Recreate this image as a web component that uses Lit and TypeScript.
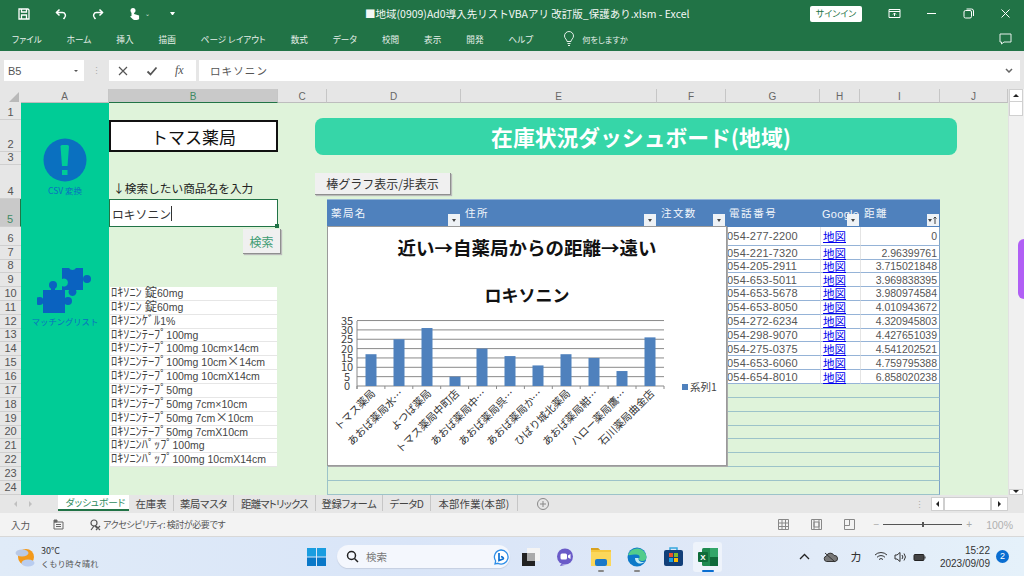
import { LitElement, html, css, svg } from "lit";
import { customElement } from "lit/decorators.js";

const COLS = ["A", "B", "C", "D", "E", "F", "G", "H", "I", "J"];
const ROW_H = [17, 32, 13, 34, 28, 19, 14, 13, 14, ...Array(15).fill(13.87)];
const LIST = [
  "ﾛｷｿﾆﾝ 錠60mg", "ﾛｷｿﾆﾝ 錠60mg", "ﾛｷｿﾆﾝｹﾞﾙ1%", "ﾛｷｿﾆﾝﾃｰﾌﾟ100mg",
  "ﾛｷｿﾆﾝﾃｰﾌﾟ100mg 10cm×14cm", "ﾛｷｿﾆﾝﾃｰﾌﾟ100mg 10cm×14cm", "ﾛｷｿﾆﾝﾃｰﾌﾟ100mg 10cmX14cm",
  "ﾛｷｿﾆﾝﾃｰﾌﾟ50mg", "ﾛｷｿﾆﾝﾃｰﾌﾟ50mg 7cm×10cm", "ﾛｷｿﾆﾝﾃｰﾌﾟ50mg 7cm×10cm",
  "ﾛｷｿﾆﾝﾃｰﾌﾟ50mg 7cmX10cm", "ﾛｷｿﾆﾝﾊﾟｯﾌﾟ100mg", "ﾛｷｿﾆﾝﾊﾟｯﾌﾟ100mg 10cmX14cm",
];
const TABLE = [
  ["054-277-2200", "0"], ["054-221-7320", "2.96399761"], ["054-205-2911", "3.715021848"],
  ["054-653-5011", "3.969838395"], ["054-653-5678", "3.980974584"], ["054-653-8050", "4.010943672"],
  ["054-272-6234", "4.320945803"], ["054-298-9070", "4.427651039"], ["054-275-0375", "4.541202521"],
  ["054-653-6060", "4.759795388"], ["054-654-8010", "6.858020238"],
];
const BARS: [string, number, number][] = [
  ["トマス薬局", 17, 371], ["あおば薬局水…", 25, 399], ["よつば薬局", 31, 427], ["トマス薬局中町店", 5, 455],
  ["あおば薬局中…", 20, 482], ["あおば薬局呉…", 16, 510], ["あおば薬局か…", 11, 538], ["ひばり城北薬局", 17, 566],
  ["あおば薬局紺…", 15, 594], ["ハロー薬局鷹…", 8, 622], ["石川薬局曲金店", 26, 650],
];
const RIBBON = ["ファイル", "ホーム", "挿入", "描画", "ページ レイアウト", "数式", "データ", "校閲", "表示", "開発", "ヘルプ"];
const SHEETS: [string, number, number][] = [
  ["在庫表", 45, 0], ["薬局マスタ", 60, -0.2], ["距離マトリックス", 82, -0.7],
  ["登録フォーム", 67, -0.3], ["データD", 48, -0.5], ["本部作業(本部)", 87, 0.3],
];

const AXIS_Y = 386;
const STEP = 9.35 / 5;

function chart() {
  const ticks = [0, 5, 10, 15, 20, 25, 30, 35];
  return html`<svg class="plot" viewBox="327 226 400 240" width="400" height="240">
    ${ticks.map((t) => svg`
      <line x1="357" x2="664" y1=${AXIS_Y - t * STEP} y2=${AXIS_Y - t * STEP} stroke="#8a8a8a" stroke-width="1"></line>
      <text x="347" y=${AXIS_Y - t * STEP + 4} text-anchor="middle" font-size="11" fill="#444">${t}</text>`)}
    <line x1="357" x2="357" y1="321" y2="389" stroke="#8a8a8a"></line>
    ${BARS.map(([label, v, x], i) => svg`
      <rect x=${x - 5.5} y=${AXIS_Y - v * STEP} width="11" height=${v * STEP} fill="#4f81bd"></rect>
      <line x1=${357 + i * 27.9} x2=${357 + i * 27.9} y1="386" y2="389" stroke="#8a8a8a"></line>
      <text transform="translate(${x + 5} 394) rotate(-45)" text-anchor="end" font-size="10.5" fill="#333">${label}</text>`)}
    <line x1="664" x2="664" y1="386" y2="389" stroke="#8a8a8a"></line>
    <rect x="682" y="384" width="6" height="6" fill="#4f81bd"></rect>
    <text x="690" y="391" font-size="10.5" fill="#444">系列1</text>
  </svg>`;
}

function listText(t: string, wide: boolean) {
  const re = wide ? /([\uFF61-\uFF9F錠×]+)/ : /([\uFF61-\uFF9F錠]+)/;
  return t.split(re).filter(Boolean).map((p, _i) =>
    re.test(p) ? html`<span class="k">${p}</span>` : html`<span class="n">${p}</span>`
  );
}

const I = {
  save: html`<svg width="14" height="14" viewBox="0 0 14 14" fill="none" stroke="#fff" stroke-width="1.3"><path d="M2 2h9l1 1v9H2z"/><path d="M4.500 2v3h5V2M4.500 12V8h5v4"/></svg>`,
  undo: html`<svg width="14" height="14" viewBox="0 0 14 14" fill="none" stroke="#fff" stroke-width="1.5"><path d="M2.500 5.500h6a3 3 0 0 1 2 5.200L9.500 12"/><path d="M5.500 2.500l-3 3 3 3"/></svg>`,
  redo: html`<svg width="14" height="14" viewBox="0 0 14 14" fill="none" stroke="#fff" stroke-width="1.5"><path d="M11.500 5.500h-6a3 3 0 0 0-2 5.200L4.500 12"/><path d="M8.500 2.500l3 3-3 3"/></svg>`,
  touch: html`<svg width="14" height="14" viewBox="0 0 14 14" fill="#fff"><circle cx="5" cy="3.500" r="2.500"/><path d="M3.500 4h2.600v3l5 1.400V12c-1 1-4 1.500-6 .5L2 9.500l1.500-.5v-5z"/></svg>`,
};

@customElement("app-root")
export class AppRoot extends LitElement {
  static styles = css`
    :host { display: block; width: 1024px; height: 576px; overflow: hidden; background: #e6e6e6;
      font-family: "Noto Sans CJK JP", "Liberation Sans", sans-serif; color: #333; }
    * { box-sizing: border-box; }
    svg { display: block; flex: none; }
    .app { display: flex; flex-direction: column; width: 1024px; height: 576px; }

    .titlebar { height: 26px; background: #217346; display: flex; align-items: center; color: #fff; padding: 1px 0 0 17px; }
    .qat { display: flex; align-items: center; gap: 23px; width: 348px; }
    .caret { font-size: 6px; opacity: .8; margin-left: -20px; }
    .dot { margin-left: -3px; width: 5px; height: 0; border: 2.5px solid transparent; border-top: 3px solid #fff; border-bottom: 0; }
    .title { width: 445px; font-size: 10.5px; white-space: nowrap; opacity: .95; }
    .signin { width: 52px; height: 16px; background: #fff; color: #217346; font-size: 9px; display: flex; align-items: center; justify-content: center; border-radius: 2px; font-feature-settings: "palt"; }
    .win { display: flex; align-items: center; margin-left: 26px; gap: 24px; }
    .win svg { width: 13px; height: 13px; }

    .ribbon { height: 25px; background: #217346; display: flex; align-items: center; color: #e6f0ea; font-size: 8.6px; padding: 0 12px 0 12px; gap: 25px; font-feature-settings: "palt"; }
    .ribbon .tell { display: flex; align-items: center; gap: 7px; margin-left: 5px; flex: 1; font-size: 8.2px; }
    .ribbon span { white-space: nowrap; }

    .fbar { height: 38px; background: #e6e6e6; display: flex; align-items: center; padding: 1px 4px 0 4px; }
    .namebox { width: 80px; height: 21px; background: #fff; display: flex; align-items: center; justify-content: space-between; padding: 0 5px 0 4px; font: 11px "Liberation Sans", sans-serif; color: #555; }
    .grip { width: 25px; text-align: center; color: #aaa; font-size: 9px; line-height: 1; }
    .fx { width: 87px; height: 21px; background: #fff; display: flex; align-items: center; gap: 17px; padding-left: 8px; }
    .fxt { font: italic 12px "Liberation Serif", serif; color: #555; }
    .finput { flex: 1; height: 21px; margin-left: 3px; background: #fff; display: flex; align-items: center; justify-content: space-between; padding: 0 7px 0 11px; font-size: 10.5px; letter-spacing: 1.1px; color: #555; }

    .sheet { position: relative; display: grid; height: 406px; background: #dff3da;
      grid-template-columns: 21px 88px 169px 49px 134px 196px 69px 94px 40px 80px 68px 16px; }
    .corner { background: #e6e6e6; position: relative; }
    .corner::after { content: ""; position: absolute; right: 2px; bottom: 1px; border-style: solid; border-width: 0 0 10px 10px; border-color: transparent transparent #b9b9b9 transparent; }
    .ch { background: #e6e6e6; border-right: 1px solid #c6c6c6; border-bottom: 1px solid #bdbdbd; font: 10px "Liberation Sans", sans-serif; color: #666; display: flex; align-items: center; justify-content: center; padding-top: 1px; }
    .ch.sel { background: #c9c9c9; border-bottom: 1px solid #217346; color: #3f8a63; }
    .rh { background: #e6e6e6; border-bottom: 1px solid #cfcfcf; font: 11px "Liberation Sans", sans-serif; color: #555; display: flex; align-items: flex-end; justify-content: center; line-height: 13px; }
    .rh.sel { background: #c9c9c9; color: #3f8a63; border-right: 1px solid #217346; }
    .band { background: #00cc96; position: relative; }
    .scroll { background: #f0f0f0; border-left: 1px solid #e2e2e2; position: relative; display: flex; flex-direction: column; justify-content: space-between; align-items: flex-end; padding-right: 1px; }
    .sbtn { width: 14px; height: 13px; background: #fff; border: 1px solid #d0d0d0; display: flex; align-items: center; justify-content: center; }
    .sbtn.low { height: 6px; }
    .sthumb { width: 14px; height: 15px; background: #fff; border: 1px solid #d0d0d0; margin-top: -1px; }
    .sgap { flex: 1; }
    .up { border-style: solid; border-width: 0 3px 3px; border-color: transparent transparent #222; }
    .down { border-style: solid; border-width: 3px 3px 0; border-color: #222 transparent transparent; }
    .purple { position: absolute; right: 0; top: 150px; width: 6px; height: 60px; background: #b15ff5; border-radius: 7px 0 0 7px; }

    .shop { background: #fff; border: 2px solid #111; font-size: 17px; color: #111; display: flex; align-items: center; justify-content: center; }
    .label { font-size: 11.7px; color: #222; display: flex; align-items: flex-end; padding: 0 0 3px 4px; white-space: nowrap; }
    .input { background: #fff; border: 1px solid #217346; font-size: 11.8px; color: #333; display: flex; align-items: center; padding-left: 2px; position: relative; }
    .input i { display: block; width: 1px; height: 15px; background: #333; }
    .input::after { content: ""; position: absolute; right: -2px; bottom: -2px; width: 4px; height: 4px; background: #217346; }
    .li { background: #fff; border-bottom: 1px solid #e6e6e6; color: #444; font: 10.5px/13px "Liberation Sans", sans-serif; margin: 0 1px; padding-left: 1px; white-space: pre; }
    .li .k { font: 12.3px/10px "Noto Sans CJK JP", sans-serif; }
    .li .n { line-height: 10px; }

    .th { background: #4f81bd; color: #f2f6fb; font-size: 10.5px; letter-spacing: 1.4px; position: relative; padding: 5px 0 0 4px; white-space: nowrap; border-top: 1px solid #95b3d7; }
    .th.c { padding-left: 3px; letter-spacing: 1.6px; }
    .th.g { padding: 8px 0 0 2px; letter-spacing: .3px; font-family: "Liberation Sans", sans-serif; font-size: 11px; }
    .flt { position: absolute; right: 1px; bottom: 1px; width: 12px; height: 12px; background: #eef2f6; display: flex; align-items: center; justify-content: center; }
    .flt b { border-style: solid; border-width: 3px 2.5px 0; border-color: #444 transparent transparent; }
    .flt.sort { justify-content: flex-start; padding-left: 1px; }
    .flt.sort svg { margin-left: 1px; }
    .tline { border-bottom: 1px solid #9cc3c9; border-left: 1px solid #9cc3c9; border-right: 1px solid #7ea3c8; }
    .td { background: #fff; border-bottom: 1px solid #95b3d7; display: flex; align-items: center; white-space: nowrap; color: #555; font-size: 10.5px; }
    .phone { font: 11px "Liberation Sans", sans-serif; letter-spacing: .2px; padding-left: 1px; color: #555; }
    .link { color: #0000ee; text-decoration: underline; font-size: 11.5px; padding-left: 2px; border-left: 1px solid #e4e4e4; }
    .num { font-family: "Liberation Sans", sans-serif; justify-content: flex-end; padding-right: 2px; border-left: 1px solid #e4e4e4; border-right: 1px solid #7ea3c8; }

    .banner { position: absolute; left: 315px; top: 29px; width: 642px; height: 37px; background: #36d6a8; border-radius: 8px; color: #fff; font-size: 21.8px; font-weight: 700; display: flex; align-items: center; justify-content: center; padding-left: 10px; }
    .btn { position: absolute; background: #f0f0f0; border-right: 1px solid #8f8f8f; border-bottom: 1px solid #8f8f8f; box-shadow: 1px 1px 1px #bbb; display: flex; align-items: center; justify-content: center; font-size: 12px; color: #333; }
    .toggle { left: 315px; top: 84px; width: 136px; height: 22px; }
    .search { left: 243px; top: 140px; width: 38px; height: 25px; color: #3e9c73; }
    .chart { position: absolute; left: 327px; top: 137px; width: 400px; height: 240px; background: #fff; border: 1px solid #9a9a9a; box-shadow: 1px 1px 0 #aaa; }
    .chart .plot { position: absolute; left: -1px; top: -1px; font-family: "Noto Sans CJK JP", sans-serif; }
    .chart h2, .chart h3 { position: absolute; left: 0; right: 0; margin: 0; text-align: center; font-weight: 700; color: #111; line-height: 1.2; }
    .chart h2 { top: 9px; font-size: 18.5px; }
    .chart h3 { top: 58px; font-size: 17px; }
    .shape { position: absolute; left: 0; right: 0; }
    .shape small { display: block; text-align: center; color: #0a70c0; line-height: 10px; }
    .shape svg { margin: 0 auto; }
    .s1 { top: 35px; }
    .s1 small { font-size: 8.5px; margin-top: 3px; }
    .s2 { top: 163px; }
    .s2 small { font-size: 8.3px; }

    .tabs { height: 18px; background: #e6e6e6; display: flex; align-items: flex-start; font-size: 10.3px; color: #444; font-feature-settings: "palt"; }
    .nav { width: 58px; display: flex; gap: 12px; padding: 6px 0 0 14px; }
    .nav i { border-style: solid; border-width: 3px 3px 3px 0; border-color: transparent #c0c0c0 transparent transparent; }
    .nav i + i { border-width: 3px 0 3px 3px; border-color: transparent transparent transparent #c0c0c0; }
    .tab { height: 16px; display: flex; align-items: center; justify-content: center; white-space: nowrap; border-right: 1px solid #c6c6c6; flex: none; }
    .tab.on { width: 71px; background: #fff; color: #2e8b5e; border-bottom: 2px solid #217346; border-right: 0; font-size: 9.6px; padding-left: 4px; }
    .plus { margin-left: 19px; margin-top: 3px; }
    .hs { margin-left: auto; display: flex; align-items: center; height: 18px; padding-right: 16px; }
    .hs .g { color: #aaa; font-size: 9px; width: 16px; }
    .hs u { display: flex; align-items: center; justify-content: center; height: 14px; background: #fff; border: 1px solid #cfcfcf; }
    .hs .l { width: 13px; }
    .hs .m { width: 47px; }
    .hs .r { width: 17px; }
    .l b { border-style: solid; border-width: 3px 3px 3px 0; border-color: transparent #222 transparent transparent; }
    .r b { border-style: solid; border-width: 3px 0 3px 3px; border-color: transparent transparent transparent #222; }

    .status { height: 24px; background: #f3f3f3; border-bottom: 1px solid #d8d8d8; display: flex; align-items: center; font-size: 9.5px; color: #555; padding-left: 11px; }
    .macro { margin-left: 23px; }
    .a11y { display: flex; align-items: center; gap: 2px; margin-left: 25px; font-size: 9px; letter-spacing: -.4px; font-feature-settings: "palt"; white-space: pre; }
    .views { margin-left: auto; display: flex; align-items: center; gap: 22px; }
    .zoomc { display: flex; align-items: center; color: #aaa; margin-left: 18px; gap: 4px; font: 10px "Liberation Sans", sans-serif; padding-right: 11px; }
    .slider { position: relative; width: 79px; height: 1px; background: #555; }
    .slider::after { content: ""; position: absolute; left: 39px; top: -2px; width: 2px; height: 5px; background: #555; }
    .pct { margin-left: 10px; font-size: 10.5px; color: #b0b0b0; }

    .taskbar { height: 39px; flex: none; background: linear-gradient(90deg, #e0ebf8, #d9e5f8 40%, #dfe8f7 70%, #e5f1fa); display: flex; align-items: center; padding-left: 15px; position: relative; }
    .weather { display: flex; align-items: center; gap: 6px; width: 292px; }
    .wt { font-size: 9px; line-height: 13px; color: #333; }
    .wt span { display: block; font-size: 8.2px; color: #555; }
    .pill { width: 173px; height: 23px; border-radius: 12px; background: #f4f7fd; box-shadow: 0 1px 1px #c5cfe0; margin-left: 11px; display: flex; align-items: center; padding: 0 1px 0 9px; gap: 7px; font-size: 10.5px; color: #777; }
    .pill .grow { flex: 1; }
    .apps { display: flex; align-items: center; gap: 14px; margin-left: 10px; }
    .app-i { width: 22px; height: 30px; display: flex; align-items: center; justify-content: center; position: relative; }
    .app-i.teams { margin-left: -2px; }
    .app-i.run::after { content: ""; position: absolute; bottom: 0; width: 6px; height: 2px; border-radius: 1px; background: #888; }
    .app-i.active { width: 29px; background: #eef3fb; border-radius: 3px; margin-left: -5px; }
    .app-i.active::after { content: ""; position: absolute; bottom: 0; width: 12px; height: 2px; border-radius: 1px; background: #0a6ed1; }
    .tray { position: absolute; right: 34px; top: 0; height: 39px; display: flex; align-items: center; color: #333; }
    .tray .cloud { margin-left: 13px; }
    .tray .kana { font-size: 12px; margin-left: 12px; }
    .tray .wifi { margin-left: 12px; }
    .tray .snd { margin-left: 6px; }
    .tray .bat { margin-left: 6px; }
    .clock { text-align: right; font: 10px/13px "Liberation Sans", sans-serif; margin-left: 13px; color: #333; }
    .badge { width: 13px; height: 13px; border-radius: 50%; background: #0a6ed1; color: #fff; font: 9px/13px "Liberation Sans", sans-serif; text-align: center; position: absolute; right: 15px; top: 13px; }
  `;

  cellPos(col: number, row: number, cspan = 1) {
    return `grid-column:${col + 2} / span ${cspan};grid-row:${row + 1}`;
  }

  render() {
    const rowsTpl = `14px ${ROW_H.map((h) => h + "px").join(" ")}`;
    return html`<div class="app">
      <div class="titlebar">
        <div class="qat">${I.save}${I.undo}${I.redo}${I.touch}<span class="caret">⌄</span><span class="dot"></span></div>
        <div class="title">■地域(0909)Ad0導入先リストVBAアリ 改訂版_保護あり.xlsm  -  Excel</div>
        <div class="signin">サインイン</div>
        <div class="win">
          <svg viewBox="0 0 13 13" fill="none" stroke="#fff"><path d="M1 2.500h11v8H1zM1 4.500h11M6.500 9V6M5 7.500l1.500-1.500L8 7.500"/></svg>
          <svg viewBox="0 0 13 13" stroke="#fff"><path d="M2 6.500h9"/></svg>
          <svg viewBox="0 0 13 13" fill="none" stroke="#fff"><rect x="2" y="3.500" width="7.500" height="7.500" rx="1.500"/><path d="M4.500 2h5a2 2 0 0 1 2 2v5"/></svg>
          <svg viewBox="0 0 13 13" stroke="#fff"><path d="M2.500 2.500l8 8M10.500 2.500l-8 8"/></svg>
        </div>
      </div>
      <div class="ribbon">
        ${RIBBON.map((t) => html`<span>${t}</span>`)}
        <div class="tell">
          <svg width="12" height="15" viewBox="0 0 12 15" fill="none" stroke="#e6f0ea"><path d="M4 10.500C4 8.500 1.500 7.500 1.500 5a4.500 4.500 0 0 1 9 0c0 2.500-2.500 3.500-2.500 5.500zM4.500 12.500h3M5 14.500h2"/></svg>
          <span>何をしますか</span>
        </div>
        <svg width="13" height="12" viewBox="0 0 13 12" fill="none" stroke="#e6f0ea"><path d="M1 1h11v8H5l-2.500 2V9H1z"/></svg>
      </div>
      <div class="fbar">
        <div class="namebox">B5<svg width="6" height="4"><path d="M1 1l2 2 2-2z" fill="#555"/></svg></div>
        <div class="grip">⋮</div>
        <div class="fx">
          <svg width="12" height="12" viewBox="0 0 12 12" stroke="#555" stroke-width="1.200"><path d="M2 2l8 8M10 2l-8 8"/></svg>
          <svg width="12" height="12" viewBox="0 0 12 12" fill="none" stroke="#555" stroke-width="1.800"><path d="M1.500 6.500l3 3 6-7"/></svg>
          <span class="fxt">fx</span>
        </div>
        <div class="finput">ロキソニン<svg width="8" height="5"><path d="M1 1l3 3 3-3" fill="none" stroke="#666" stroke-width="1.500"/></svg></div>
      </div>

      <div class="sheet" style="grid-template-rows:${rowsTpl}">
        <div class="corner" style="grid-column:1;grid-row:1"></div>
        ${COLS.map((c, i) => html`<div class="ch ${c === "B" ? "sel" : ""}" style="grid-column:${i + 2};grid-row:1">${c}</div>`)}
        ${ROW_H.map((_, i) => html`<div class="rh ${i === 4 ? "sel" : ""}" style="grid-column:1;grid-row:${i + 2}">${i + 1}</div>`)}

        <div class="band" style="grid-column:2;grid-row:2 / 26">
          <div class="shape s1">
            <svg width="44" height="44" viewBox="0 0 44 44">
              <circle cx="22" cy="22" r="21.500" fill="#0a70c0"/>
              <path d="M17.500 8.500a1.500 1.500 0 0 1 1.500-1.500h5.500a1.500 1.500 0 0 1 1.500 1.500L24.500 28h-5.500z" fill="#00cc96"/>
              <rect x="19" y="32" width="5.500" height="5" fill="#00cc96"/>
            </svg>
            <small>CSV 変換</small>
          </div>
          <div class="shape s2">
            <svg width="56" height="50" viewBox="0 0 56 50" fill="#0a62c0">
              <rect x="6" y="24" width="22" height="23"/>
              <circle cx="16" cy="19" r="4"/><rect x="14" y="21" width="4" height="5"/>
              <circle cx="2.500" cy="35" r="4"/><circle cx="31" cy="35" r="4"/>
              <path d="M26 3h7a4 4 0 0 0 7 0h7v22h-7a4 4 0 1 1-7 0h-7v-4a4 4 0 1 0 0-7z" transform="translate(-1 -1)"/>
              <circle cx="50" cy="13" r="4"/>
            </svg>
            <small>マッチングリスト</small>
          </div>
        </div>

        <div class="shop" style=${this.cellPos(1, 2)}>トマス薬局</div>
        <div class="label" style=${this.cellPos(1, 4)}>↓検索したい商品名を入力</div>
        <div class="input" style=${this.cellPos(1, 5)}>ロキソニン<i></i></div>
        ${LIST.map((t, i) => html`<div class="li" style=${this.cellPos(1, 10 + i)}>${listText(t, i === 5 || i === 9)}</div>`)}

        <div class="th" style=${this.cellPos(3, 5)}>薬局名<span class="flt"><b></b></span></div>
        <div class="th" style=${this.cellPos(4, 5)}>住所<span class="flt"><b></b></span></div>
        <div class="th" style=${this.cellPos(5, 5)}>注文数<span class="flt"><b></b></span></div>
        <div class="th c" style=${this.cellPos(6, 5)}>電話番号</div>
        <div class="th g" style=${this.cellPos(7, 5)}>Google<span class="flt"><b></b></span></div>
        <div class="th" style=${this.cellPos(8, 5)}>距離<span class="flt sort"><b></b><svg width="4" height="8" viewBox="0 0 4 8" fill="none" stroke="#444"><path d="M2 8V1M.5 2.500L2 1l1.500 1.500"/></svg></span></div>

        ${ROW_H.map((_, i) => (i >= 5 ? html`<div class="tline" style=${this.cellPos(3, i + 1, 6)}></div>` : ""))}
        ${TABLE.map(([p, d], i) => html`
          <div class="td phone" style=${this.cellPos(6, 6 + i)}>${p}</div>
          <div class="td link" style=${this.cellPos(7, 6 + i)}>地図</div>
          <div class="td num" style=${this.cellPos(8, 6 + i)}>${d}</div>`)}

        <div class="scroll" style="grid-column:12;grid-row:1 / 26">
          <div class="sbtn"><span class="up"></span></div>
          <div class="sthumb"></div>
          <div class="sgap"></div>
          <div class="sbtn low"><span class="down"></span></div>
          <div class="purple"></div>
        </div>

        <div class="banner">在庫状況ダッシュボード(地域)</div>
        <div class="btn toggle">棒グラフ表示/非表示</div>
        <div class="btn search">検索</div>
        <div class="chart">
          <h2>近い→自薬局からの距離→遠い</h2>
          <h3>ロキソニン</h3>
          ${chart()}
        </div>
      </div>

      <div class="tabs">
        <div class="nav"><i></i><i></i></div>
        <div class="tab on">ダッシュボード</div>
        ${SHEETS.map(([s, w, ls]) => html`<div class="tab" style="width:${w}px;letter-spacing:${ls}px">${s}</div>`)}
        <svg class="plus" width="12" height="12" viewBox="0 0 12 12" fill="none" stroke="#888"><circle cx="6" cy="6" r="5.500"/><path d="M3 6h6M6 3v6"/></svg>
        <div class="hs">
          <span class="g">⋮</span>
          <u class="l"><b></b></u><u class="m"></u><u class="r"><b></b></u>
        </div>
      </div>

      <div class="status">
        <span>入力</span>
        <svg class="macro" width="11" height="11" viewBox="0 0 11 11" fill="none" stroke="#666"><path d="M1 3h9v7H1zM3 5.500h5M3 7.500h5"/><path d="M1 1h3v2H1z" fill="#666"/></svg>
        <div class="a11y">
          <svg width="12" height="12" viewBox="0 0 12 12" fill="none" stroke="#555" stroke-width="1.200"><circle cx="5" cy="4" r="3"/><path d="M5 7l-3 4M6 7l2 2M7 11l4-4M7 7l4 4"/></svg>
          <span>アクセシビリティ: 検討が必要です</span>
        </div>
        <div class="views">
          <svg width="11" height="11" viewBox="0 0 11 11" fill="none" stroke="#888"><path d="M.5.500h10v10H.5zM.5 4h10M.5 7.500h10M4 .500v10M7.500.500v10"/></svg>
          <svg width="11" height="11" viewBox="0 0 11 11" fill="none" stroke="#888"><path d="M.5.500h10v10H.5zM3 .500v10M8 .500v10M3 3h5v5H3z"/></svg>
          <svg width="11" height="11" viewBox="0 0 11 11" fill="none" stroke="#888"><path d="M.5.500h10v10H.5zM.5 6.500h5v-6"/></svg>
        </div>
        <div class="zoomc"><span>−</span><div class="slider"></div><span>+</span><span class="pct">100%</span></div>
      </div>

      <div class="taskbar">
        <div class="weather">
          <svg width="20" height="22" viewBox="0 0 20 22">
            <circle cx="11" cy="11" r="8" fill="#f39a1c"/>
            <ellipse cx="7" cy="7" rx="6.500" ry="3.500" fill="#b9c9e6"/>
            <ellipse cx="13" cy="17" rx="6.500" ry="3.500" fill="#b9cdf0"/>
          </svg>
          <div class="wt">30°C<span>くもり時々晴れ</span></div>
        </div>
        <svg width="19" height="18" viewBox="0 0 19 18"><g fill="#1a9de0"><rect width="9" height="8.500"/><rect x="10" width="9" height="8.500"/></g><g fill="#0a78c8"><rect y="9.500" width="9" height="8.500"/><rect x="10" y="9.500" width="9" height="8.500"/></g></svg>
        <div class="pill">
          <svg width="13" height="13" viewBox="0 0 13 13" fill="none" stroke="#222" stroke-width="1.500"><circle cx="5.500" cy="5.500" r="4"/><path d="M8.500 8.500l3.500 3.500"/></svg>
          <span class="grow">検索</span>
          <svg width="16" height="16" viewBox="0 0 16 16"><path d="M8 1a7 7 0 1 1-3 13.300L2 15l.7-3A7 7 0 0 1 8 1z" fill="#fff" stroke="#2d8ee8" stroke-width="1.300"/><path d="M6 4v7.500l4-1.500c1-.6 0-2-2-2.500" fill="none" stroke="#0b6fd0" stroke-width="1.700"/></svg>
        </div>
        <div class="apps">
          <div class="app-i"><svg width="18" height="18" viewBox="0 0 18 18"><rect x="5" y="0" width="13" height="13" fill="#f4f4f4"/><rect x="0" y="5" width="13" height="13" fill="#222"/><rect x="5" y="5" width="8" height="8" fill="#aaa"/></svg></div>
          <div class="app-i teams"><svg width="18" height="18" viewBox="0 0 18 18"><circle cx="9" cy="8.500" r="8" fill="#6a5bc8"/><path d="M5 16l-1 2 5-1z" fill="#6a5bc8"/><rect x="4.500" y="5.500" width="6.500" height="6" rx="1.500" fill="#fff"/><path d="M12 7.500l2.500-1.500v5L12 9.500z" fill="#fff"/></svg></div>
          <div class="app-i run"><svg width="20" height="18" viewBox="0 0 20 18"><path d="M0 0h7l2 2h11v16H0z" fill="#f5c73d"/><path d="M0 0h7l2 2H0z" fill="#d9a21f"/><rect x="0" y="4" width="20" height="14" fill="#fbd75b"/><rect x="4" y="11" width="12" height="7" rx="2" fill="#1a78c8"/></svg></div>
          <div class="app-i run"><svg width="20" height="20" viewBox="0 0 20 20"><circle cx="10" cy="10" r="9.500" fill="#0c79c9"/><path d="M1 8a9.500 9.500 0 0 1 18.500 2c0 3-2.500 4.500-5 4-2 -.4-3-1.500-3-3 2 .5 1.500-3.500-2-3.500-4 0-7 1-8.500.5z" fill="#52cc8b"/><path d="M8 11c0 3 2 6 6 5.500a9 9 0 0 0 4-2c-3 1.500-7 0-6.500-3.500z" fill="#bdeaf5"/></svg></div>
          <div class="app-i"><svg width="19" height="19" viewBox="0 0 19 19"><path d="M6 3V1h7v2" fill="none" stroke="#37a7dd" stroke-width="1.500"/><rect y="3" width="19" height="16" rx="2" fill="#123f79"/><rect x="5" y="6" width="4" height="4" fill="#e8512b"/><rect x="10" y="6" width="4" height="4" fill="#7fba2a"/><rect x="5" y="11" width="4" height="4" fill="#1ba1e2"/><rect x="10" y="11" width="4" height="4" fill="#fdb900"/></svg></div>
          <div class="app-i active"><svg width="20" height="18" viewBox="0 0 20 18"><rect x="4" width="16" height="18" rx="1.500" fill="#1f8a50"/><rect x="12" width="8" height="9" fill="#33a66a"/><rect x="12" y="9" width="8" height="9" fill="#0f6a3a"/><rect x="0" y="4" width="10" height="10" rx="1" fill="#0f6b3a"/><text x="5" y="12" font-size="8" font-weight="700" fill="#fff" text-anchor="middle" font-family="Liberation Sans">X</text></svg></div>
        </div>
        <div class="tray">
          <svg width="11" height="7" viewBox="0 0 11 7" fill="none" stroke="#222" stroke-width="1.300"><path d="M1 6l4.500-4.500L10 6"/></svg>
          <svg class="cloud" width="15" height="12" viewBox="0 0 15 12" fill="#777" stroke="#333"><path d="M3.500 10.500a2.800 2.800 0 0 1 0-5.500 4 4 0 0 1 7.500-.5 3 3 0 0 1 1 6zM2 2l10 9"/></svg>
          <span class="kana">カ</span>
          <svg class="wifi" width="14" height="11" viewBox="0 0 14 11" fill="none" stroke="#333"><path d="M1 4a8.500 8.500 0 0 1 12 0M3 6.300a5.500 5.500 0 0 1 8 0M5 8.500a2.800 2.800 0 0 1 4 0"/></svg>
          <svg class="snd" width="13" height="12" viewBox="0 0 13 12" fill="none" stroke="#333"><path d="M1 4h2l3-2.500v9L3 8H1zM8 4a3 3 0 0 1 0 4M10 2.500a5.500 5.500 0 0 1 0 7"/></svg>
          <svg class="bat" width="14" height="10" viewBox="0 0 14 10" fill="#444" stroke="#222"><rect x="1" y="2.500" width="10" height="6" rx="1"/><path d="M12 4.500v2"/></svg>
          <div class="clock">15:22<br />2023/09/09</div>
        </div>
        <div class="badge">2</div>
      </div>
    </div>`;
  }
}
